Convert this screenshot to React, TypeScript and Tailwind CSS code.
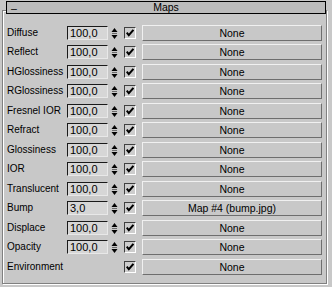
import React from "react";

type Row = { label: string; value?: string; map: string };

const rows: Row[] = [
  { label: "Diffuse", value: "100,0", map: "None" },
  { label: "Reflect", value: "100,0", map: "None" },
  { label: "HGlossiness", value: "100,0", map: "None" },
  { label: "RGlossiness", value: "100,0", map: "None" },
  { label: "Fresnel IOR", value: "100,0", map: "None" },
  { label: "Refract", value: "100,0", map: "None" },
  { label: "Glossiness", value: "100,0", map: "None" },
  { label: "IOR", value: "100,0", map: "None" },
  { label: "Translucent", value: "100,0", map: "None" },
  { label: "Bump", value: "3,0", map: "Map #4 (bump.jpg)" },
  { label: "Displace", value: "100,0", map: "None" },
  { label: "Opacity", value: "100,0", map: "None" },
  { label: "Environment", map: "None" },
];

const Spinner = () => (
  <svg width="7" height="13" viewBox="0 0 7 13" className="block">
    <path d="M3.5 1 L6.5 5 L0.5 5 Z" fill="#000" />
    <rect x="1" y="6" width="5" height="1" fill="#6a6a6a" />
    <path d="M0.5 8 L6.5 8 L3.5 12 Z" fill="#000" />
  </svg>
);

const Check = () => (
  <div className="w-[12px] h-[12px] border-t border-l border-t-[#404040] border-l-[#404040] border-b border-r border-b-white border-r-white bg-[#cdcdcd] flex items-center justify-center">
    <svg width="8" height="8" viewBox="0 0 8 8" className="block">
      <path d="M0.7 3.6 L2.8 6.2 L7.4 0.8" fill="none" stroke="#000" strokeWidth="2" />
    </svg>
  </div>
);

const MapRow = ({ row, odd }: { row: Row; odd: boolean }) => (
  <div className={odd ? "h-[20px]" : "h-[19px]"}>
    <div className="h-[16px] flex items-center">
      <div className="w-[60px] whitespace-nowrap leading-none text-[10px]">{row.label}</div>
      {row.value ? (
        <>
          <div className="w-[41px] h-[14px] border-t border-l border-t-[#1a1a1a] border-l-[#1a1a1a] border-b border-r border-b-[#e8e8e8] border-r-[#e8e8e8] bg-[#d6d6d6] pl-[2px] leading-[12px] text-[11px]">
            {row.value}
          </div>
          <div className="ml-[3px] w-[7px]">
            <Spinner />
          </div>
        </>
      ) : (
        <div className="w-[51px]" />
      )}
      <div className="ml-[6px]">
        <Check />
      </div>
      <div className="ml-[6px] w-[180px] h-[16px] border-t border-l border-t-[#f0f0f0] border-l-[#f0f0f0] border-b border-r border-b-[#6e6e6e] border-r-[#6e6e6e] flex items-center justify-center leading-none">
        {row.map}
      </div>
    </div>
  </div>
);

export default function App() {
  return (
    <div className="w-[332px] h-[287px] bg-[#c8c8c8] text-black text-[10.5px] font-['Liberation_Sans',Arial,sans-serif] pt-px overflow-hidden">
      {/* Rollout title */}
      <div className="relative z-10 ml-[6px] w-[320px] h-[13px] border border-black bg-[#bcbcbc] flex items-center leading-none">
        <span className="absolute left-[4px] top-[1px]">–</span>
        <span className="flex-1 text-center">Maps</span>
      </div>

      {/* Group frame */}
      <div className="-mt-[4px] ml-[2px] w-[325px] h-[274px] border border-[#808080] shadow-[inset_1px_1px_0_#fff,1px_1px_0_#fff] pt-[14px] pl-[4px]">
        {rows.map((r, i) => (
          <MapRow key={r.label} row={r} odd={i % 2 === 1} />
        ))}
      </div>
    </div>
  );
}
